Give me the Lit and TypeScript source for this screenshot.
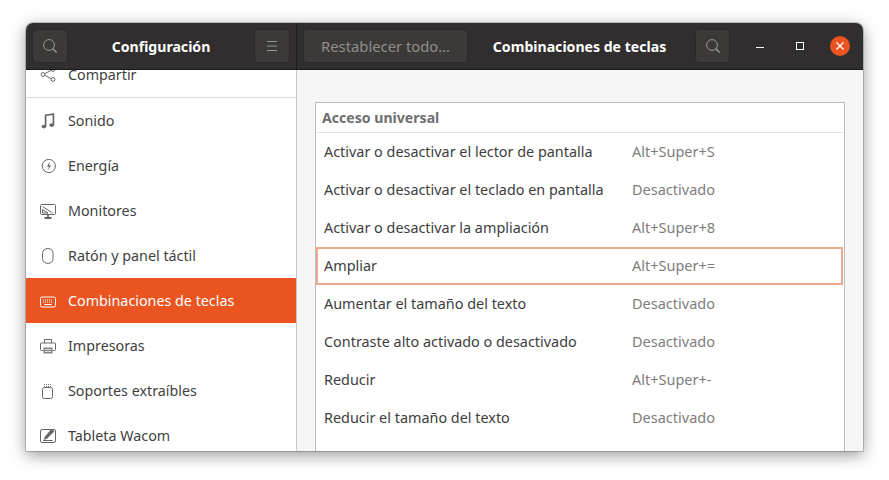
import { LitElement, html, css, svg } from "lit";
import { customElement } from "lit/decorators.js";

const search = html`<svg width="14" height="14" viewBox="0 0 14 14" fill="none" stroke="currentColor" stroke-width="1"><circle cx="6" cy="6" r="5.4"/><path d="M9.8 9.8 13.6 13.6" stroke-width="1.3"/></svg>`;

const icons: Record<string, unknown> = {
  share: svg`<circle cx="3" cy="7.5" r="1.9"/><circle cx="13" cy="2.5" r="1.9"/><circle cx="13" cy="12.5" r="1.9"/><path d="M4.7 6.6 11.3 3.3M4.7 8.4l6.6 3.3"/>`,
  music: svg`<path d="M5.6 13.5V2.2L13.4 1.2V12" stroke-width="1.7"/><ellipse cx="3.9" cy="13.6" rx="2.3" ry="1.8" fill="currentColor" stroke="none"/><ellipse cx="11.7" cy="12.1" rx="2.4" ry="1.8" fill="currentColor" stroke="none"/>`,
  power: svg`<circle cx="8.8" cy="8" r="6.6"/><path d="M9.6 3.8 7 8.6h1.8l-.6 3.6 2.7-5H9z" fill="currentColor" stroke="none"/>`,
  monitor: svg`<rect x="0.5" y="1.5" width="15" height="10" rx="1"/><path d="M2.5 3.5 12.5 10M2.5 6.5l5.5 3.5H2.5z"/><path d="M4.5 15h7M8 12v3" stroke-width="1.8"/>`,
  mouse: svg`<path d="M2.5 5.5C2.5 2.5 4.6 .6 8 .6s5 1.900 5 4.900v5c0 3-2 4.900-5 4.900s-5.500-1.900-5.500-4.900z"/>`,
  keyboard: svg`<rect x="0.5" y="4" width="15" height="10" rx="1.5"/><path d="M3 7h10M3 9h10" stroke-dasharray="1 1"/><path d="M4.5 11.5h7"/>`,
  printer: svg`<path d="M4.5 5V1.5h7V5"/><path d="M3.5 12.5H1.5a1 1 0 0 1-1-1V6a1 1 0 0 1 1-1h13a1 1 0 0 1 1 1v5.500a1 1 0 0 1-1 1h-2"/><rect x="3.500" y="9.500" width="9" height="6" fill="currentColor" stroke="none" opacity=".8"/><path d="M5 11.500h6M5 13.500h6" stroke="#fff" opacity=".7"/>`,
  usb: svg`<path d="M4 1.500h7M4 3.500h7" stroke-dasharray="1 1" opacity=".85"/><rect x="2.500" y="4.500" width="10" height="11" rx="2"/>`,
  wacom: svg`<rect x="0.500" y="1.500" width="15" height="13" rx="1.500"/><path d="M3.500 12 5 8.500 11.500 .800 14.400 3.300 7 10.700z" fill="currentColor" stroke="none"/><path d="M3 12.500h9.500" />`,
};

const items = [
  ["share", "Compartir"],
  ["music", "Sonido"],
  ["power", "Energía"],
  ["monitor", "Monitores"],
  ["mouse", "Ratón y panel táctil"],
  ["keyboard", "Combinaciones de teclas"],
  ["printer", "Impresoras"],
  ["usb", "Soportes extraíbles"],
  ["wacom", "Tableta Wacom"],
];

const rows = [
  ["Activar o desactivar el lector de pantalla", "Alt+Super+S"],
  ["Activar o desactivar el teclado en pantalla", "Desactivado"],
  ["Activar o desactivar la ampliación", "Alt+Super+8"],
  ["Ampliar", "Alt+Super+="],
  ["Aumentar el tamaño del texto", "Desactivado"],
  ["Contraste alto activado o desactivado", "Desactivado"],
  ["Reducir", "Alt+Super+-"],
  ["Reducir el tamaño del texto", "Desactivado"],
];

@customElement("app-root")
export class AppRoot extends LitElement {
  static styles = css`
    :host {
      display: block;
      width: 889px;
      height: 480px;
      overflow: hidden;
      background: #fff;
      font-family: "Noto Sans", sans-serif;
      font-size: 14px;
      color: #3d3d3d;
    }
    .desk {
      padding: 23px 26px 29px;
      height: 100%;
      box-sizing: border-box;
    }
    .win {
      height: 428px;
      border-radius: 7px 7px 0 0;
      overflow: hidden;
      display: flex;
      flex-direction: column;
      box-shadow: 0 0 0 1px rgba(0, 0, 0, 0.18), 0 4px 16px rgba(0, 0, 0, 0.42);
    }
    .bar {
      height: 47px;
      flex: none;
      box-sizing: border-box;
      background: #302e2e;
      border-bottom: 1px solid #191818;
      display: flex;
      color: #fff;
    }
    .bar-left {
      width: 271px;
      flex: none;
      box-sizing: border-box;
      border-right: 1px solid #1f1e1e;
      display: flex;
      align-items: center;
      padding: 0 6px;
    }
    .bar-right {
      flex: 1;
      display: flex;
      align-items: center;
      padding-left: 6px;
    }
    .btn {
      height: 34px;
      box-sizing: border-box;
      background: #3b3a38;
      border: 1px solid #2a2828;
      border-radius: 4px;
      display: flex;
      align-items: center;
      justify-content: center;
      color: #9a9997;
      flex: none;
    }
    .icon-btn { width: 36px; }
    .icon-btn.narrow { width: 35px; }
    .reset {
      width: 165px;
      font-size: 14.8px;
      color: #8f8e8c;
    }
    .title {
      font-weight: 700;
      font-size: 14.1px;
      color: #fff;
      white-space: nowrap;
      text-align: center;
    }
    .title-main { flex: 1; }
    .title-sub { width: 227px; flex: none; padding-right: 4px; box-sizing: border-box; }
    .wmin { width: 8px; height: 0; border-top: 1px solid #fff; margin: 3px 0 0 26px; flex: none; }
    .wmax { width: 6px; height: 6px; border: 1px solid #fff; margin-left: 32px; flex: none; }
    .wclose {
      width: 20px;
      height: 20px;
      border-radius: 50%;
      background: #e95420;
      display: flex;
      align-items: center;
      justify-content: center;
      margin-left: 26px;
      flex: none;
    }
    .body { flex: 1; display: flex; min-height: 0; }
    .side {
      width: 271px;
      flex: none;
      box-sizing: border-box;
      background: #fff;
      border-right: 1px solid #c9c9c9;
      overflow: hidden;
    }
    .side-list { margin-top: -18px; }
    .item {
      height: 45px;
      display: flex;
      align-items: center;
      padding-left: 14px;
      color: #3f3f3f;
      font-size: 14.3px;
      white-space: nowrap;
    }
    .item.first { border-bottom: 1px solid #dcdcdc; }
    .item.on { background: #e95420; color: #fff; }
    .item svg {
      width: 16px;
      height: 16px;
      margin-right: 12px;
      flex: none;
      color: #666;
      fill: none;
      stroke: currentColor;
      stroke-width: 1;
    }
    .item.on svg { color: #fff; }
    .content {
      flex: 1;
      background: #f6f6f6;
      padding: 32px 18px 0;
      overflow: hidden;
    }
    .frame {
      height: 100%;
      box-sizing: border-box;
      background: #fff;
      border: 1px solid #bdbdbd;
      border-bottom: none;
    }
    .head {
      height: 30px;
      box-sizing: border-box;
      border-bottom: 1px solid #e4e4e4;
      padding-left: 6px;
      display: flex;
      align-items: center;
      font-weight: 700;
      font-size: 14.1px;
      color: #6f6f6f;
    }
    .row {
      height: 38px;
      box-sizing: border-box;
      display: flex;
      align-items: center;
      padding: 0 0 2px 8px;
      white-space: nowrap;
      color: #3d3d3d;
      font-size: 14.4px;
    }
    .row .label { width: 308px; flex: none; }
    .row .key { color: #7d7d7d; font-size: 14.5px; }
    .row.sel { border: 2px solid #f2a88f; padding: 0 0 2px 6px; margin-right: 1px; }
  `;

  render() {
    return html`
      <div class="desk">
        <div class="win">
          <div class="bar">
            <div class="bar-left">
              <div class="btn icon-btn">${search}</div>
              <div class="title title-main">Configuración</div>
              <div class="btn icon-btn">
                <svg width="12" height="12" viewBox="0 0 12 12" stroke="currentColor" stroke-width="1"><path d="M1 1.500h10M1 6h10M1 10.500h10"/></svg>
              </div>
            </div>
            <div class="bar-right">
              <div class="btn reset">Restablecer todo…</div>
              <div class="title title-sub">Combinaciones de teclas</div>
              <div class="btn icon-btn narrow">${search}</div>
              <div class="wmin"></div>
              <div class="wmax"></div>
              <div class="wclose">
                <svg width="10" height="10" viewBox="0 0 10 10" stroke="#fff" stroke-width="1.400"><path d="M1.500 1.500l7 7M8.500 1.500l-7 7"/></svg>
              </div>
            </div>
          </div>
          <div class="body">
            <div class="side">
              <div class="side-list">
                ${items.map(
                  ([ic, label], i) => html`<div class="item ${i === 0 ? "first" : ""} ${i === 5 ? "on" : ""}">
                    <svg viewBox="0 0 16 16">${icons[ic]}</svg><span>${label}</span>
                  </div>`
                )}
              </div>
            </div>
            <div class="content">
              <div class="frame">
                <div class="head">Acceso universal</div>
                ${rows.map(
                  ([a, b], i) => html`<div class="row ${i === 3 ? "sel" : ""}">
                    <span class="label">${a}</span><span class="key">${b}</span>
                  </div>`
                )}
              </div>
            </div>
          </div>
        </div>
      </div>
    `;
  }
}
